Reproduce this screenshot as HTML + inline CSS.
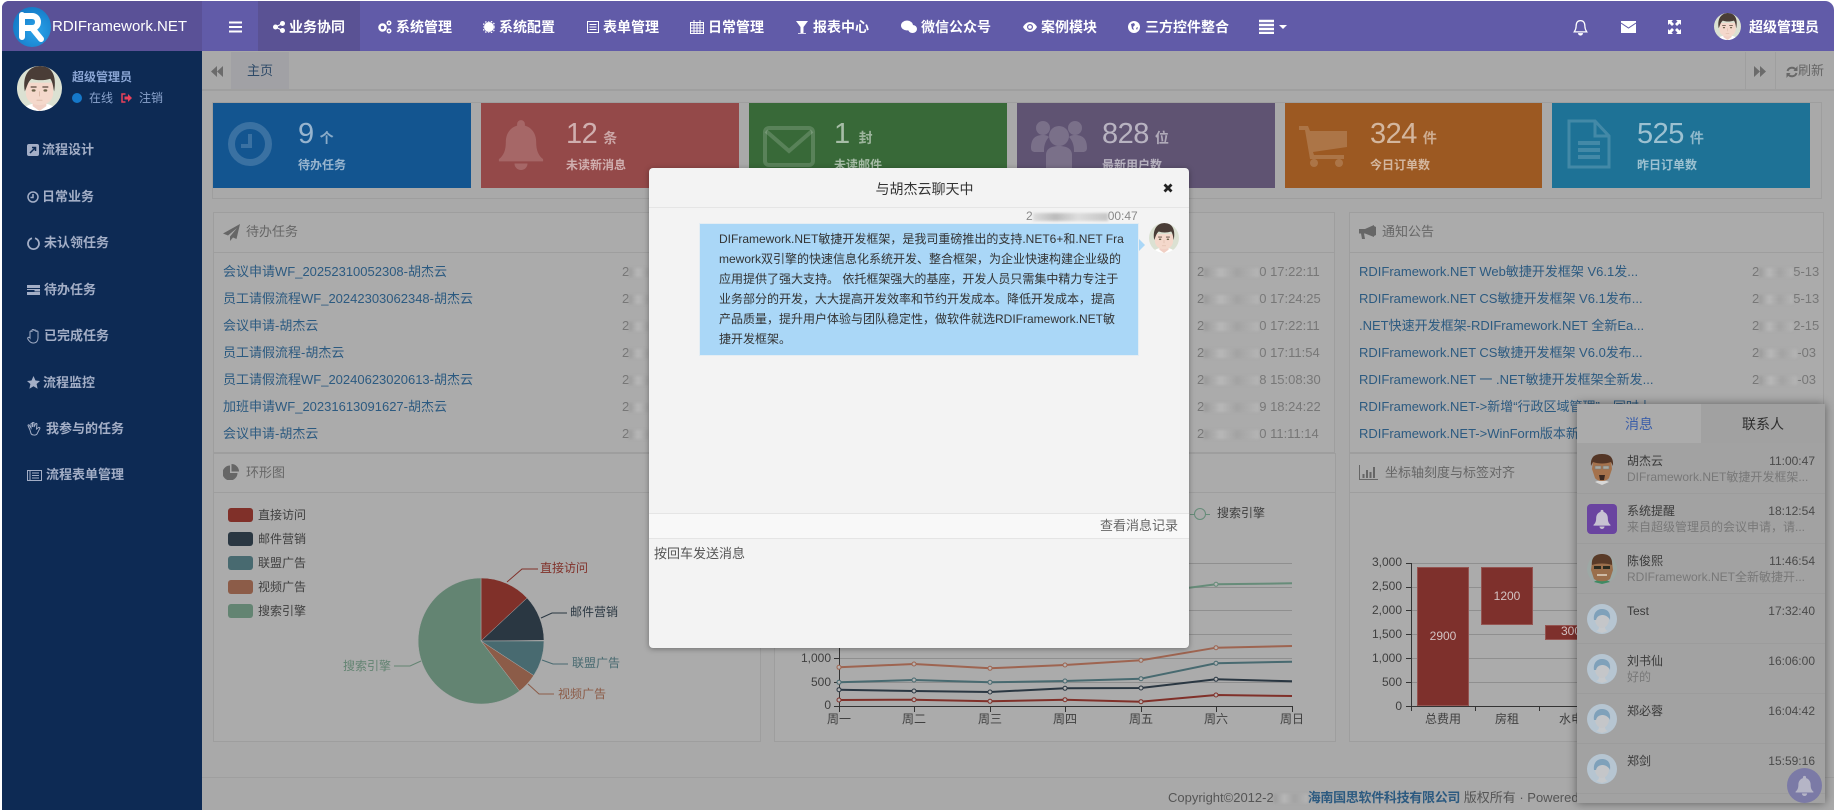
<!DOCTYPE html>
<html lang="zh"><head><meta charset="utf-8"><title>RDIFramework.NET</title>
<style>
*{box-sizing:border-box}
html,body{margin:0;padding:0}
body{position:relative;width:1834px;height:810px;overflow:hidden;background:#fff;font:13px/16px "Liberation Sans","Noto Sans CJK SC",sans-serif;color:#333}
.a,.t,svg.i{position:absolute}
.t{white-space:nowrap}
.n{color:#fff;font-weight:700;font-size:14px;top:19px}
.side{color:#a3aec6;font-weight:700;font-size:13px}
.box{position:absolute;top:103px;height:85px}
.num{position:absolute;top:13px;left:85px;font-size:29px;line-height:36px;color:rgba(255,255,255,.56);white-space:nowrap;letter-spacing:-.5px}
.num b{font-size:14px;font-weight:700;margin-left:6px;letter-spacing:0;opacity:.9}
.lab{position:absolute;top:54px;left:85px;font-size:12px;font-weight:700;color:rgba(255,255,255,.56);white-space:nowrap}
.p{position:absolute;border:1px solid #9e9e9e;background:#ababab}
.pt{font-size:13px;color:#666}
.l{color:#2c5a80;font-size:13px}
.d{color:#777;font-size:13px}
.b{display:inline-block;height:9px;background:linear-gradient(90deg,#999,#b8b8b8 30%,#a2a2a2 60%,#b5b5b5);filter:blur(1.2px);vertical-align:-1px}
.pn{color:#3a3a3a;font-size:12px;left:1627px}
.ps{color:#787878;font-size:12px;left:1627px}
.pc{color:#4a4a4a;font-size:12px;right:19px}
.hr{position:absolute;left:1577px;width:248px;height:1px;background:#9c9c9c}
svg text{font-family:"Liberation Sans","Noto Sans CJK SC",sans-serif;font-size:12px}
</style></head><body>
<svg width="0" height="0" style="position:absolute"><defs>
<symbol id="bell" viewBox="0 0 24 24"><path d="M12 1a1.8 1.8 0 0 0-1.8 1.8v.7C7 4.400 5 7.300 5 11c0 4-1 6.200-3.200 8v1h20.400v-1C20 17.200 19 15 19 11c0-3.700-2-6.600-5.200-7.500v-.7A1.800 1.800 0 0 0 12 1zM9 21a3 3 0 0 0 6 0z"/></symbol>
<clipPath id="cc"><circle cx="23" cy="23" r="23"/></clipPath>
<symbol id="man" viewBox="0 0 46 46"><g clip-path="url(#cc)"><rect width="46" height="46" fill="#dbe1d2"/><path d="M6 46c1-5 8-8 17-8s16 3 17 8z" fill="#fff"/><path d="M16 33h14v8l-7 5-7-5z" fill="#f0cfc4"/><path d="M9 17h28v10c0 9-7 13-14 13S9 36 9 27z" fill="#f4d8cb"/><path d="M8 26C5 9 13 0 24 0s17 9 14 26c-1-3-1-9-4-13-6 2-14 2-19 0-4 3-5 9-7 13z" fill="#4a3d37"/><path d="M14 21.500h6M26 21.500h6" stroke="#5a473c" stroke-width="1.300"/><ellipse cx="17" cy="25" rx="2" ry="1.200" fill="#6a6148"/><ellipse cx="29" cy="25" rx="2" ry="1.200" fill="#6a6148"/><path d="M23 26v5M20 35h6" stroke="#dba" stroke-width="1"/></g></symbol>
<symbol id="def" viewBox="0 0 30 30"><circle cx="15" cy="15" r="15" fill="#b6c5d1"/><path d="M9 27c3-1 3-3 3-5h6c0 2 0 4 3 5l-6 2z" fill="#c6c9cc"/><ellipse cx="15" cy="15" rx="7" ry="9" fill="#c4c6c9"/><path d="M7 16C6 9 10 5 15 5s9 3 8 11c-1-3-5-5-7-5-3 0-6 1-7 5z" fill="#7fa1ba"/></symbol>
</defs></svg>

<!-- Content background -->
<div class="a" style="left:202px;top:51px;width:1632px;height:759px;background:#a9a9a9"></div>

<!-- Header -->
<div class="a" style="left:2px;top:1px;width:1832px;height:50px;background:#615ba8;border-radius:7px 9px 0 0;overflow:hidden">
<div class="a" style="left:0;top:0;width:200px;height:50px;background:#5a5197"></div>
<div class="a" style="left:256px;top:0;width:102px;height:50px;background:#5a5294"></div>
</div>
<div class="a" style="left:13px;top:7px;width:38px;height:40px;border-radius:50%;background:radial-gradient(circle at 60% 60%,#2aa3ea,#0d6dbb)"></div>
<svg class="i" style="left:19px;top:12px" width="28" height="30" viewBox="0 0 28 30"><path d="M3 3v22M3 4h10c8 0 8 12 0 12H5M13 16l9 11" fill="none" stroke="#fff" stroke-width="6" stroke-linecap="round"/></svg>
<div class="t" style="left:52px;top:17px;color:#fff;font-size:15px;line-height:20px">RDIFramework.NET</div>

<svg class="i" style="left:229px;top:21px" width="13" height="12"><path d="M0 1.500h13M0 6h13M0 10.500h13" stroke="#fff" stroke-width="2"/></svg>
<svg class="i" style="left:273px;top:21px" width="12" height="12" fill="#fff"><circle cx="2.500" cy="6" r="2.500"/><circle cx="9.500" cy="2.500" r="2.500"/><circle cx="9.500" cy="9.500" r="2.500"/><path d="M2.500 6l7-3.500M2.500 6l7 3.500" stroke="#fff" stroke-width="1.200"/></svg>
<div class="t n" style="left:289px">业务协同</div>
<svg class="i" style="left:377px;top:20px" width="15" height="14" fill="none" stroke="#fff"><circle cx="5.500" cy="7.500" r="3" stroke-width="2.500"/><circle cx="12" cy="3" r="1.700" stroke-width="1.500"/><circle cx="12" cy="11" r="1.700" stroke-width="1.500"/></svg>
<div class="t n" style="left:396px">系统管理</div>
<svg class="i" style="left:483px;top:21px" width="12" height="12"><circle cx="6" cy="6" r="5" fill="#fff"/><circle cx="6" cy="6" r="6" fill="none" stroke="#fff" stroke-width="1.200" stroke-dasharray="1.500 1.500"/></svg>
<div class="t n" style="left:499px">系统配置</div>
<svg class="i" style="left:587px;top:21px" width="12" height="12" fill="none" stroke="#fff"><rect x=".5" y=".5" width="11" height="11"/><path d="M2.500 3.500h7M2.500 6h7M2.500 8.500h7"/></svg>
<div class="t n" style="left:603px">表单管理</div>
<svg class="i" style="left:690px;top:20px" width="14" height="14" fill="none" stroke="#fff"><rect x=".5" y="2.500" width="13" height="11"/><path d="M.5 5h13M.5 8h13M.5 11h13M4 2v12M7 2v12M10 2v12M4 0v3M10 0v3"/></svg>
<div class="t n" style="left:708px">日常管理</div>
<svg class="i" style="left:796px;top:21px" width="12" height="13" fill="#fff"><path d="M0 0h12L7.500 6v6H4.500V6zM2 12.300h8v.7H2z"/></svg>
<div class="t n" style="left:813px">报表中心</div>
<svg class="i" style="left:901px;top:20px" width="16" height="14" fill="#fff"><ellipse cx="6" cy="5.500" rx="6" ry="5"/><ellipse cx="11.500" cy="9" rx="4.500" ry="4"/></svg>
<div class="t n" style="left:921px">微信公众号</div>
<svg class="i" style="left:1023px;top:22px" width="14" height="10"><path d="M0 5c3.500-6.500 10.500-6.500 14 0-3.500 6.500-10.500 6.500-14 0z" fill="#fff"/><circle cx="7" cy="5" r="3" fill="#615ba8"/><circle cx="7" cy="5" r="1.800" fill="#fff"/></svg>
<div class="t n" style="left:1041px">案例模块</div>
<svg class="i" style="left:1128px;top:21px" width="12" height="12"><circle cx="6" cy="6" r="6" fill="#fff"/><path d="M3 3l3-1 1 2-2 2 1 3-2-1zM8 7l2-1-1 3z" fill="#615ba8"/></svg>
<div class="t n" style="left:1145px">三方控件整合</div>
<svg class="i" style="left:1259px;top:19px" width="29" height="15"><path d="M0 2h15M0 6h15M0 10h15M0 14h15" stroke="#fff" stroke-width="2.400"/><path d="M20 6h8l-4 4z" fill="#fff"/></svg>
<svg class="i" style="left:1573px;top:19px" width="15" height="17" viewBox="0 0 24 26" fill="none" stroke="#fff" stroke-width="2"><path d="M12 2c-5 0-7 4-7 9 0 4-1 6-3 9h20c-2-3-3-5-3-9 0-5-2-9-7-9z"/><path d="M9 22a3 3 0 0 0 6 0" fill="#fff"/></svg>
<svg class="i" style="left:1621px;top:21px" width="15" height="12"><rect width="15" height="12" fill="#fff"/><path d="M0 2l7.500 5L15 2" fill="none" stroke="#615ba8" stroke-width="1"/></svg>
<svg class="i" style="left:1668px;top:20px" width="13" height="14" fill="#fff"><path d="M0 0h5L3.500 1.500 6 4 4 6 1.500 3.500 0 5zM13 0v5L11.500 3.500 9 6 7 4 9.500 1.500 8 0zM0 14V9l1.500 1.500L4 8l2 2-2.500 2.500L5 14zM13 14H8l1.500-1.500L7 10l2-2 2.500 2.500L13 9z"/></svg>
<svg class="i" style="left:1714px;top:13px" width="27" height="27"><use href="#man" width="27" height="27"/></svg>
<div class="t n" style="left:1749px;top:19px">超级管理员</div>

<!-- Sidebar -->
<div class="a" style="left:2px;top:51px;width:200px;height:759px;background:#0d2a54"></div>
<svg class="i" style="left:17px;top:66px" width="45" height="45"><use href="#man" width="45" height="45"/></svg>
<div class="t" style="left:72px;top:69px;color:#8aa5d4;font-size:12px;font-weight:700">超级管理员</div>
<div class="a" style="left:72px;top:93px;width:10px;height:10px;border-radius:50%;background:#1578c9"></div>
<div class="t" style="left:89px;top:90px;color:#8aa3cc;font-size:12px">在线</div>
<svg class="i" style="left:121px;top:93px" width="11" height="10" fill="none"><path d="M4.500 1H1v8h3.500" stroke="#e8415a" stroke-width="1.500"/><path d="M3.500 3.500h3.500V1l4 4-4 4V6.500H3.500z" fill="#e8415a"/></svg>
<div class="t" style="left:139px;top:90px;color:#8aa3cc;font-size:12px">注销</div>

<svg class="i" style="left:27px;top:144px" width="12" height="12"><rect width="12" height="12" rx="2" fill="#a3aec6"/><path d="M3 9l5-5M5 3.500h3.500V7" stroke="#0d2a54" stroke-width="1.500" fill="none"/></svg>
<div class="t side" style="left:42px;top:142px">流程设计</div>
<svg class="i" style="left:27px;top:191px" width="12" height="12" fill="none" stroke="#a3aec6" stroke-width="1.500"><circle cx="6" cy="6" r="5"/><path d="M6 3v3.500H3.500"/></svg>
<div class="t side" style="left:42px;top:189px">日常业务</div>
<svg class="i" style="left:27px;top:237px" width="13" height="13" fill="none" stroke="#a3aec6" stroke-width="1.800"><path d="M8 1.300a5.500 5.500 0 1 1-3 0"/></svg>
<div class="t side" style="left:44px;top:235px">未认领任务</div>
<svg class="i" style="left:27px;top:285px" width="13" height="10" fill="#a3aec6"><path d="M0 0h13v3H0zM0 4h13v2.500H7.500V5H0zM0 7h13v3H0z"/></svg>
<div class="t side" style="left:44px;top:282px">待办任务</div>
<svg class="i" style="left:27px;top:329px" width="13" height="15" viewBox="0 0 13 15" fill="none" stroke="#a3aec6"><path d="M3 9V3a1 1 0 0 1 2 0V1.500a1 1 0 0 1 2 0V2a1 1 0 0 1 2 0v1a1 1 0 0 1 2 0v6c0 3-2 5-4 5H6C4 14 2 12 .8 10 .300 8.500 2 7.500 3 9z"/></svg>
<div class="t side" style="left:44px;top:328px">已完成任务</div>
<svg class="i" style="left:27px;top:376px" width="13" height="13"><path d="M6.500 0l2 4.500 4.500.5-3.400 3 1 4.700-4.100-2.400-4.100 2.400 1-4.700L0 5l4.500-.5z" fill="#a3aec6"/></svg>
<div class="t side" style="left:43px;top:375px">流程监控</div>
<svg class="i" style="left:27px;top:422px" width="15" height="14" fill="none" stroke="#a3aec6"><path d="M3 8L1 3.500c0-1 1.200-1 1.500 0L4 6V2c0-1 1.500-1 1.500 0v3-4c0-1 1.500-1 1.500 0v4l1.500-3c.5-1 1.700-.5 1.400.5L9.500 7l2-1.500c1-.5 2 .5 1 1.500L10 12c-1 1.500-5 1.500-6-.5z"/></svg>
<div class="t side" style="left:46px;top:421px">我参与的任务</div>
<svg class="i" style="left:27px;top:470px" width="15" height="11" fill="none" stroke="#a3aec6"><rect x=".5" y=".5" width="14" height="10"/><path d="M3 .5v10M5 3h7M5 5.500h7M5 8h7"/></svg>
<div class="t side" style="left:46px;top:467px">流程表单管理</div>

<!-- Tabs -->
<div class="a" style="left:202px;top:89px;width:1632px;height:2px;background:#9f9f9f"></div>
<div class="a" style="left:231px;top:52px;width:58px;height:37px;background:#a1a1a5"></div>
<svg class="i" style="left:211px;top:66px" width="13" height="11" fill="#6b6b6b"><path d="M6 0v11L0 5.500zM12 0v11L6 5.500z"/></svg>
<div class="t" style="left:247px;top:63px;color:#2e4a68">主页</div>
<div class="a" style="left:1745px;top:52px;width:1px;height:37px;background:#9f9f9f"></div>
<div class="a" style="left:1775px;top:52px;width:1px;height:37px;background:#9f9f9f"></div>
<svg class="i" style="left:1754px;top:66px" width="12" height="11" fill="#6b6b6b"><path d="M0 0v11l6-5.500zM6 0v11l6-5.500z"/></svg>
<svg class="i" style="left:1786px;top:66px" width="12" height="12" fill="none" stroke="#686868" stroke-width="2"><path d="M1.500 5A4.700 4.700 0 0 1 10 4M10.500 7A4.700 4.700 0 0 1 2 8"/><path d="M11.500 0v5h-4zM.5 12V7h4z" fill="#686868" stroke="none"/></svg>
<div class="t" style="left:1798px;top:63px;color:#666">刷新</div>

<!-- Stat row -->
<div class="p" style="left:212px;top:102px;width:1610px;height:97px;background:#a9a9a9"></div>
<div class="box" style="left:213px;width:258px;background:#135590"><div class="num">9<b>个</b></div><div class="lab">待办任务</div>
<svg class="i" style="left:15px;top:19px" width="44" height="44" fill="none" stroke="rgba(255,255,255,.17)"><circle cx="22" cy="22" r="18.500" stroke-width="7"/><path d="M22 12v12h-9" stroke-width="4"/></svg></div>
<div class="box" style="left:481px;width:258px;background:#944949"><div class="num">12<b>条</b></div><div class="lab">未读新消息</div>
<svg class="i" style="left:14px;top:15px" width="52" height="52" fill="rgba(255,255,255,.17)"><use href="#bell" width="52" height="52"/></svg></div>
<div class="box" style="left:749px;width:258px;background:#386938"><div class="num">1<b style="margin-left:9px">封</b></div><div class="lab">未读邮件</div>
<svg class="i" style="left:14px;top:23px" width="52" height="41" fill="none" stroke="rgba(255,255,255,.17)" stroke-width="4"><rect x="2" y="2" width="48" height="37" rx="4"/><path d="M3 5l23 20L49 5"/></svg></div>
<div class="box" style="left:1017px;width:258px;background:#5f5372"><div class="num">828<b>位</b></div><div class="lab">最新用户数</div>
<svg class="i" style="left:14px;top:16px" width="56" height="50" fill="rgba(255,255,255,.17)"><circle cx="12" cy="9" r="7"/><circle cx="44" cy="9" r="7"/><path d="M0 29c0-10 5-13 12-13 3 0 5 1 6 2-3 3-5 8-5 13v2H4c-2 0-4-1-4-4zM56 29c0-10-5-13-12-13-3 0-5 1-6 2 3 3 5 8 5 13v2h9c2 0 4-1 4-4z"/><circle cx="28" cy="17" r="10"/><path d="M15 50V36c0-6 5-9 13-9s13 3 13 9v14z"/></svg></div>
<div class="box" style="left:1285px;width:257px;background:#9c5922"><div class="num">324<b>件</b></div><div class="lab">今日订单数</div>
<svg class="i" style="left:14px;top:23px" width="48" height="41" fill="rgba(255,255,255,.17)"><path d="M0 0h9l2 5h37v16l-34 5 1 3h30v4H11L6 4H0z"/><circle cx="15" cy="37" r="4"/><circle cx="40" cy="37" r="4"/></svg></div>
<div class="box" style="left:1552px;width:258px;background:#1e7296"><div class="num">525<b>件</b></div><div class="lab">昨日订单数</div>
<svg class="i" style="left:15px;top:16px" width="44" height="50" fill="none" stroke="rgba(255,255,255,.17)" stroke-width="3"><path d="M2 2h26l14 15v31H2zM28 2v15h14"/><path d="M11 24h22M11 31h22M11 38h22" stroke-width="4"/></svg></div>

<!-- Panels -->
<div class="p" style="left:213px;top:212px;width:1122px;height:241px"></div>
<div class="a" style="left:213px;top:252px;width:1122px;height:1px;background:#9e9e9e"></div>
<svg class="i" style="left:223px;top:224px" width="17" height="17" fill="#666"><path d="M17 0L0 9.500l5 2L14 4 7 12.500V17l3-3.500 3.500 1.500z"/></svg>
<div class="t pt" style="left:246px;top:224px">待办任务</div>
<div class="t l" style="left:223px;top:264px">会议申请WF_20252310052308-胡杰云</div>
<div class="t l" style="left:223px;top:291px">员工请假流程WF_20242303062348-胡杰云</div>
<div class="t l" style="left:223px;top:318px">会议申请-胡杰云</div>
<div class="t l" style="left:223px;top:345px">员工请假流程-胡杰云</div>
<div class="t l" style="left:223px;top:372px">员工请假流程WF_20240623020613-胡杰云</div>
<div class="t l" style="left:223px;top:399px">加班申请WF_20231613091627-胡杰云</div>
<div class="t l" style="left:223px;top:426px">会议申请-胡杰云</div>
<div class="t d" style="left:622px;top:264px">2<i class="b" style="width:30px"></i></div>
<div class="t d" style="left:622px;top:291px">2<i class="b" style="width:30px"></i></div>
<div class="t d" style="left:622px;top:318px">2<i class="b" style="width:30px"></i></div>
<div class="t d" style="left:622px;top:345px">2<i class="b" style="width:30px"></i></div>
<div class="t d" style="left:622px;top:372px">2<i class="b" style="width:30px"></i></div>
<div class="t d" style="left:622px;top:399px">2<i class="b" style="width:30px"></i></div>
<div class="t d" style="left:622px;top:426px">2<i class="b" style="width:30px"></i></div>
<div class="t d" style="left:1197px;top:264px">2<i class="b" style="width:55px"></i>0 17:22:11</div>
<div class="t d" style="left:1197px;top:291px">2<i class="b" style="width:55px"></i>0 17:24:25</div>
<div class="t d" style="left:1197px;top:318px">2<i class="b" style="width:55px"></i>0 17:22:11</div>
<div class="t d" style="left:1197px;top:345px">2<i class="b" style="width:55px"></i>0 17:11:54</div>
<div class="t d" style="left:1197px;top:372px">2<i class="b" style="width:55px"></i>8 15:08:30</div>
<div class="t d" style="left:1197px;top:399px">2<i class="b" style="width:55px"></i>9 18:24:22</div>
<div class="t d" style="left:1197px;top:426px">2<i class="b" style="width:55px"></i>0 11:11:14</div>

<div class="p" style="left:1349px;top:212px;width:475px;height:241px"></div>
<div class="a" style="left:1349px;top:252px;width:475px;height:1px;background:#9e9e9e"></div>
<svg class="i" style="left:1359px;top:225px" width="17" height="15" fill="#666"><path d="M0 4h6L15 0v12L6 8.500H5l1 5.500H3L2 8.500H0z"/><path d="M15 1l2 1v8l-2 1z"/></svg>
<div class="t pt" style="left:1382px;top:224px">通知公告</div>
<div class="t l" style="left:1359px;top:264px">RDIFramework.NET Web敏捷开发框架 V6.1发...</div>
<div class="t l" style="left:1359px;top:291px">RDIFramework.NET CS敏捷开发框架 V6.1发布...</div>
<div class="t l" style="left:1359px;top:318px">.NET快速开发框架-RDIFramework.NET 全新Ea...</div>
<div class="t l" style="left:1359px;top:345px">RDIFramework.NET CS敏捷开发框架 V6.0发布...</div>
<div class="t l" style="left:1359px;top:372px">RDIFramework.NET 一 .NET敏捷开发框架全新发...</div>
<div class="t l" style="left:1359px;top:399px">RDIFramework.NET-&gt;新增“行政区域管理”，同时上</div>
<div class="t l" style="left:1359px;top:426px">RDIFramework.NET-&gt;WinForm版本新增新的通知</div>
<div class="t d" style="left:1752px;top:264px">2<i class="b" style="width:34px"></i>5-13</div>
<div class="t d" style="left:1752px;top:291px">2<i class="b" style="width:34px"></i>5-13</div>
<div class="t d" style="left:1752px;top:318px">2<i class="b" style="width:34px"></i>2-15</div>
<div class="t d" style="left:1752px;top:345px">2<i class="b" style="width:38px"></i>-03</div>
<div class="t d" style="left:1752px;top:372px">2<i class="b" style="width:38px"></i>-03</div>

<div class="p" style="left:213px;top:453px;width:548px;height:289px"></div>
<div class="p" style="left:774px;top:453px;width:562px;height:289px"></div>
<div class="p" style="left:1349px;top:453px;width:475px;height:289px"></div>
<div class="a" style="left:213px;top:492px;width:548px;height:1px;background:#9e9e9e"></div>
<div class="a" style="left:774px;top:492px;width:562px;height:1px;background:#9e9e9e"></div>
<div class="a" style="left:1349px;top:492px;width:475px;height:1px;background:#9e9e9e"></div>
<svg class="i" style="left:223px;top:464px" width="16" height="16" fill="#666"><path d="M7 1.500V9h7.500A7.500 7.500 0 1 1 7 1.500z"/><path d="M8.500 0A7.500 7.500 0 0 1 16 7.500H8.500z"/></svg>
<div class="t pt" style="left:246px;top:465px">环形图</div>
<svg class="i" style="left:1359px;top:465px" width="19" height="15" fill="#666"><path d="M0 0h1v14h18v1H0z"/><path d="M3.500 9h2v4h-2zM7 5h2v8H7zM10.500 7h2v6h-2zM14 2h2v11h-2z"/></svg>
<div class="t pt" style="left:1385px;top:465px">坐标轴刻度与标签对齐</div>

<!-- Charts -->
<svg class="a" style="left:0;top:0" width="1834" height="810">
<!-- pie legend -->
<g><rect x="228" y="508" width="25" height="14" rx="3" fill="#803029"/><rect x="228" y="532" width="25" height="14" rx="3" fill="#2a3742"/><rect x="228" y="556" width="25" height="14" rx="3" fill="#486a70"/><rect x="228" y="580" width="25" height="14" rx="3" fill="#8c5c48"/><rect x="228" y="604" width="25" height="14" rx="3" fill="#638472"/></g>
<g fill="#3f3f3f"><text x="258" y="519">直接访问</text><text x="258" y="543">邮件营销</text><text x="258" y="567">联盟广告</text><text x="258" y="591">视频广告</text><text x="258" y="615">搜索引擎</text></g>
<!-- pie -->
<g stroke="#a9a9a9" stroke-width=".5">
<path d="M481 641V578A63 63 0 0 1 527.100 598Z" fill="#803029"/>
<path d="M481 641L527.100 598A63 63 0 0 1 544 640.300Z" fill="#2a3742"/>
<path d="M481 641H544A63 63 0 0 1 533.700 675.500Z" fill="#486a70"/>
<path d="M481 641L533.700 675.500A63 63 0 0 1 519.500 691Z" fill="#8c5c48"/>
<path d="M481 641L519.500 691A63 63 0 1 1 481 578Z" fill="#638472"/>
</g>
<g fill="none"><path d="M507 582l15-13h16" stroke="#803029"/><path d="M541 618l11-5h15" stroke="#2a3742"/><path d="M542 660l11 4h15" stroke="#486a70"/><path d="M528 684l11 10h15" stroke="#8c5c48"/><path d="M421 661l-11 5h-16" stroke="#638472"/></g>
<text x="540" y="572" fill="#803029">直接访问</text><text x="570" y="616" fill="#2a3742">邮件营销</text><text x="572" y="667" fill="#486a70">联盟广告</text><text x="558" y="698" fill="#8c5c48">视频广告</text><text x="343" y="670" fill="#638472">搜索引擎</text>

<!-- line chart -->
<g stroke="#8f8f8f"><path d="M839 563.500H1292M839 587.500H1292M839 610.500H1292M839 634.500H1292M839 658.500H1292M839 682.500H1292"/></g>
<path d="M839.500 560V706.500H1292.500" fill="none" stroke="#333"/>
<path d="M834 658.500h5M834 682.500h5M834 706.500h5M839.500 706v6M914.500 706v6M990.500 706v6M1065.500 706v6M1141.500 706v6M1216.500 706v6M1292.500 706v6" stroke="#333"/>
<g fill="#3f3f3f"><text x="831" y="662" text-anchor="end">1,000</text><text x="831" y="686" text-anchor="end">500</text><text x="831" y="709" text-anchor="end">0</text>
<g text-anchor="middle"><text x="839" y="723">周一</text><text x="914" y="723">周二</text><text x="990" y="723">周三</text><text x="1065" y="723">周四</text><text x="1141" y="723">周五</text><text x="1216" y="723">周六</text><text x="1292" y="723">周日</text></g></g>
<g fill="none" stroke-width="2">
<polyline stroke="#803029" points="839,700 914,699.700 990,701.300 1065,699.700 1141,701.700 1216,695 1292,696"/>
<polyline stroke="#2a3742" points="839,689.700 914,691 990,692 1065,688.300 1141,688 1216,679.300 1292,681.300"/>
<polyline stroke="#486a70" points="839,682.300 914,680 990,682.300 1065,681 1141,678.700 1216,663.300 1292,661.700"/>
<polyline stroke="#9e6450" points="839,667.300 914,664 990,668.300 1065,665 1141,660.300 1216,647.700 1292,646"/>
<polyline stroke="#668c79" points="1141,594 1216,584.300 1292,583.300"/>
</g>
<g stroke-width="1" fill="#b3b3b3">
<g stroke="#803029"><circle cx="839" cy="700" r="2"/><circle cx="914" cy="699.700" r="2"/><circle cx="990" cy="701.300" r="2"/><circle cx="1065" cy="699.700" r="2"/><circle cx="1141" cy="701.700" r="2"/><circle cx="1216" cy="695" r="2"/></g>
<g stroke="#2a3742"><circle cx="839" cy="689.700" r="2"/><circle cx="914" cy="691" r="2"/><circle cx="990" cy="692" r="2"/><circle cx="1065" cy="688.300" r="2"/><circle cx="1141" cy="688" r="2"/><circle cx="1216" cy="679.300" r="2"/></g>
<g stroke="#486a70"><circle cx="839" cy="682.300" r="2"/><circle cx="914" cy="680" r="2"/><circle cx="990" cy="682.300" r="2"/><circle cx="1065" cy="681" r="2"/><circle cx="1141" cy="678.700" r="2"/><circle cx="1216" cy="663.300" r="2"/></g>
<g stroke="#9e6450"><circle cx="839" cy="667.300" r="2"/><circle cx="914" cy="664" r="2"/><circle cx="990" cy="668.300" r="2"/><circle cx="1065" cy="665" r="2"/><circle cx="1141" cy="660.300" r="2"/><circle cx="1216" cy="647.700" r="2"/></g>
<g stroke="#668c79"><circle cx="1216" cy="584.300" r="2"/></g>
</g>
<path d="M1190 514.500h20" stroke="#668c79"/><circle cx="1200" cy="514" r="5.500" fill="#a9a9a9" stroke="#668c79"/>
<text x="1217" y="517" fill="#3f3f3f">搜索引擎</text>

<!-- bar chart -->
<g stroke="#8f8f8f"><path d="M1411 563.500H1600M1411 587.500H1600M1411 610.500H1600M1411 634.500H1600M1411 658.500H1600M1411 682.500H1600"/></g>
<path d="M1411.500 563V706.500H1600" fill="none" stroke="#333"/>
<path d="M1406 563.500h5M1406 587.500h5M1406 610.500h5M1406 634.500h5M1406 658.500h5M1406 682.500h5M1406 706.500h5M1411.500 706v5M1475.500 706v5M1539.500 706v5" stroke="#333"/>
<g fill="#3f3f3f" text-anchor="end"><text x="1402" y="566">3,000</text><text x="1402" y="590">2,500</text><text x="1402" y="614">2,000</text><text x="1402" y="638">1,500</text><text x="1402" y="662">1,000</text><text x="1402" y="686">500</text><text x="1402" y="710">0</text></g>
<g fill="#3f3f3f" text-anchor="middle"><text x="1443" y="723">总费用</text><text x="1507" y="723">房租</text><text x="1571" y="723">水电</text></g>
<g fill="#7e302c" stroke="#945451"><rect x="1417.500" y="567.500" width="51" height="138"/><rect x="1481.500" y="567.500" width="51" height="57"/><rect x="1545.500" y="625.500" width="51" height="14"/></g>
<g fill="#d3c3c3" text-anchor="middle"><text x="1443" y="640">2900</text><text x="1507" y="600">1200</text><text x="1571" y="635">300</text></g>
</svg>

<!-- Footer -->
<div class="a" style="left:202px;top:777px;width:1632px;height:1px;background:#9f9f9f"></div>
<div class="t" style="left:1168px;top:790px;color:#555">Copyright©2012-2<i class="b" style="width:34px"></i><span style="color:#2c5a80;font-weight:700;letter-spacing:-.3px">海南国思软件科技有限公司</span> 版权所有 · Powered</div>

<!-- Chat list -->
<div class="a" style="left:1577px;top:404px;width:248px;height:399px;background:#a2a2a2;box-shadow:0 0 9px rgba(0,0,0,.45)"></div>
<div class="a" style="left:1577px;top:404px;width:124px;height:39px;background:#ababab"></div>
<div class="a" style="left:1701px;top:404px;width:124px;height:39px;background:#a1a1a1"></div>
<div class="t" style="left:1625px;top:416px;font-size:14px;color:#3b5ea8">消息</div>
<div class="t" style="left:1742px;top:416px;font-size:14px;color:#2e2e2e">联系人</div>
<div class="hr" style="top:493px"></div><div class="hr" style="top:543px"></div><div class="hr" style="top:593px"></div><div class="hr" style="top:643px"></div><div class="hr" style="top:693px"></div><div class="hr" style="top:743px"></div><div class="hr" style="top:793px"></div>

<svg class="i" style="left:1587px;top:453px" width="30" height="32" viewBox="0 0 30 32"><path d="M8 29c3-2 11-2 14 0l-7 3z" fill="#d8d8d8"/><path d="M6 8C6 2 24 2 24 8l1 8-3 9c-3 4-11 4-14 0l-3-9z" fill="#a5724c"/><path d="M4 13C3 2 10 1 15 1s12 1 11 12l-2-4c-5 2-13 2-18 0z" fill="#543626"/><path d="M8 13h6v3H8zM16 13h6v3h-6z" fill="#a9a9a0" stroke="#777" stroke-width=".6"/><path d="M12 22h6l-1 5h-4z" fill="#3a2820"/></svg>
<svg class="i" style="left:1587px;top:504px" width="30" height="30"><rect width="30" height="30" rx="4" fill="#6a44a0"/><use href="#bell" x="5" y="5" width="20" height="20" fill="#c7c2d2"/></svg>
<svg class="i" style="left:1587px;top:554px" width="30" height="30" viewBox="0 0 30 30"><circle cx="15" cy="15" r="15" fill="#9da8a5"/><path d="M7 28c3-3 13-3 16 0l-8 2z" fill="#3f8a63"/><path d="M5 8C5 2 25 2 25 8l1 8-3 9c-4 3-12 3-16 0l-3-9z" fill="#9a6f4c"/><path d="M5 11C4 2 10 0 15 0s11 2 10 11c-5-2-15-2-20 0z" fill="#5a3b28"/><path d="M7 12h7v3H7zM16 12h7v3h-7z" fill="#2b2b20"/><path d="M10 21h10" stroke="#e0d5c5" stroke-width="1.500"/></svg>
<svg class="i" style="left:1587px;top:604px" width="30" height="30"><use href="#def" width="30" height="30"/></svg>
<svg class="i" style="left:1587px;top:654px" width="30" height="30"><use href="#def" width="30" height="30"/></svg>
<svg class="i" style="left:1587px;top:704px" width="30" height="30"><use href="#def" width="30" height="30"/></svg>
<svg class="i" style="left:1587px;top:754px" width="30" height="30"><use href="#def" width="30" height="30"/></svg>

<div class="t pn" style="top:453px">胡杰云</div><div class="t pc" style="top:453px">11:00:47</div><div class="t ps" style="top:469px">DIFramework.NET敏捷开发框架...</div>
<div class="t pn" style="top:503px">系统提醒</div><div class="t pc" style="top:503px">18:12:54</div><div class="t ps" style="top:519px">来自超级管理员的会议申请，请...</div>
<div class="t pn" style="top:553px">陈俊熙</div><div class="t pc" style="top:553px">11:46:54</div><div class="t ps" style="top:569px">RDIFramework.NET全新敏捷开...</div>
<div class="t pn" style="top:603px">Test</div><div class="t pc" style="top:603px">17:32:40</div>
<div class="t pn" style="top:653px">刘书仙</div><div class="t pc" style="top:653px">16:06:00</div><div class="t ps" style="top:669px">好的</div>
<div class="t pn" style="top:703px">郑必蓉</div><div class="t pc" style="top:703px">16:04:42</div>
<div class="t pn" style="top:753px">郑剑</div><div class="t pc" style="top:753px">15:59:16</div>
<div class="a" style="left:1787px;top:768px;width:35px;height:35px;border-radius:50%;background:#7b7aa6"></div>
<svg class="i" style="left:1794px;top:775px" width="21" height="21" fill="#b5b5c6"><use href="#bell" width="21" height="21"/></svg>

<!-- Modal -->
<div class="a" style="left:649px;top:168px;width:540px;height:480px;background:#f3f3f3;border-radius:4px;box-shadow:0 1px 6px rgba(0,0,0,.35)"></div>
<div class="a" style="left:649px;top:207px;width:540px;height:1px;background:#e5e5e5"></div>
<div class="t" style="left:649px;top:179px;width:551px;text-align:center;font-size:14px;line-height:20px;color:#333">与胡杰云聊天中</div>
<svg class="i" style="left:1163px;top:183px" width="10" height="10"><path d="M1.500 1.500l7 7M8.500 1.500l-7 7" stroke="#222" stroke-width="2.800"/></svg>
<div class="t" style="left:1026px;top:208px;font-size:12px;color:#888">2<i class="b" style="width:75px;height:8px;background:linear-gradient(90deg,#ddd,#bbb 30%,#ddd 60%,#c5c5c5)"></i>00:47</div>
<div class="a" style="left:699px;top:223px;width:440px;height:133px;background:#aad7f7;border:1px solid #e4edf3"></div>
<svg class="i" style="left:1139px;top:239px" width="6" height="12"><path d="M0 0l6 6-6 6z" fill="#aad7f7"/></svg>
<div class="t" style="left:719px;top:229px;font-size:12px;line-height:20px;color:#333">DIFramework.NET敏捷开发框架，是我司重磅推出的支持.NET6+和.NET Fra<br>mework双引擎的快速信息化系统开发、整合框架，为企业快速构建企业级的<br>应用提供了强大支持。 依托框架强大的基座，开发人员只需集中精力专注于<br>业务部分的开发，大大提高开发效率和节约开发成本。降低开发成本，提高<br>产品质量，提升用户体验与团队稳定性，做软件就选RDIFramework.NET敏<br>捷开发框架。</div>
<svg class="i" style="left:1149px;top:223px" width="30" height="30"><use href="#man" width="30" height="30"/></svg>
<div class="a" style="left:649px;top:513px;width:540px;height:26px;background:#f8f8f8;border-top:1px solid #e5e5e5;border-bottom:1px solid #e5e5e5"></div>
<div class="t" style="right:656px;top:518px;font-size:13px;color:#666">查看消息记录</div>
<div class="t" style="left:654px;top:546px;font-size:13px;color:#555">按回车发送消息</div>
</body></html>
